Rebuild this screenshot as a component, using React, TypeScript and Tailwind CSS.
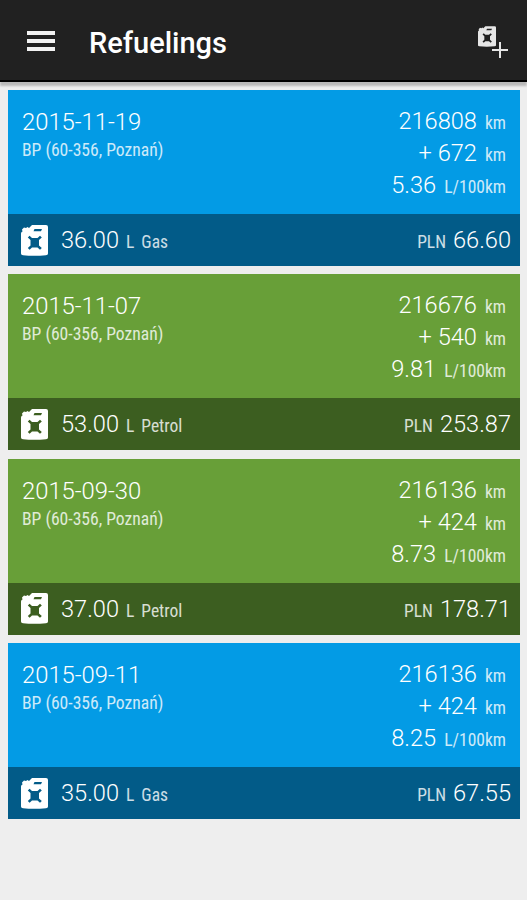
interface Refueling {
    date: string;
    station: string;
    odometer: string;
    distance: string;
    consumption: string;
    volume: string;
    fuel: "Gas" | "Petrol";
    price: string;
}

const refuelings: Refueling[] = [
    { date: "2015-11-19", station: "BP (60-356, Poznań)", odometer: "216808", distance: "+ 672", consumption: "5.36", volume: "36.00", fuel: "Gas", price: "66.60" },
    { date: "2015-11-07", station: "BP (60-356, Poznań)", odometer: "216676", distance: "+ 540", consumption: "9.81", volume: "53.00", fuel: "Petrol", price: "253.87" },
    { date: "2015-09-30", station: "BP (60-356, Poznań)", odometer: "216136", distance: "+ 424", consumption: "8.73", volume: "37.00", fuel: "Petrol", price: "178.71" },
    { date: "2015-09-11", station: "BP (60-356, Poznań)", odometer: "216136", distance: "+ 424", consumption: "8.25", volume: "35.00", fuel: "Gas", price: "67.55" },
];

const fuelColors = {
    Gas: { body: "bg-[#039be5]", footer: "bg-[#025b88]" },
    Petrol: { body: "bg-[#689f38]", footer: "bg-[#3c5e20]" },
};

// Jerry can with the handle slot and the X cut out
const CanIcon = ({ className }: { className?: string }) => (
    <svg viewBox="0 0 27 31" className={className} fill="currentColor" fillRule="evenodd">
        <path d="M11 0H25Q27 0 27 2V28.5Q27 30 25 30.3Q13 31.3 2 30.3Q0 30 0 28.5V8.5Q0 7 1.5 6.5L1 4.5L3 2.5L5 3L6.5 2L8 3ZM13.5 4L12.5 6.3H20L21 4ZM6.8 12.5L9.5 15V20.5L6.8 23L8.6 24.8L11 22.5H16.5L19 24.8L20.8 23L18 20.5V15L20.8 12.5L19 10.7L16.5 13H11L8.6 10.7Z" />
    </svg>
);

const Header = () => (
    <header className="relative z-10 flex h-[82px] shrink-0 items-center border-b-2 border-black bg-[#212121] pl-[27px] pr-[19px] text-white shadow-[0_4px_2px_rgba(0,0,0,0.22)]">
        <div className="mt-[2px] flex w-7 flex-col gap-1">
            <span className="h-1 bg-[#f2f2f2]" />
            <span className="h-1 bg-[#f2f2f2]" />
            <span className="h-1 bg-[#f2f2f2]" />
        </div>
        <h1 className="ml-[34px] mt-[5px] text-[29px] leading-8 font-medium">Refuelings</h1>
        <div className="relative ml-auto mt-[3px] h-8 w-[30px] text-[#e6e6e6]">
            <CanIcon className="h-[21px] w-[18px]" />
            <svg viewBox="0 0 16 16" className="absolute right-0 bottom-0 size-4" stroke="currentColor" strokeWidth="2">
                <path d="M8 0V16M0 8H16" />
            </svg>
        </div>
    </header>
);

const Measure = ({ value, unit }: { value: string; unit: string }) => (
    <div className="flex h-8 items-baseline justify-end gap-2">
        <span className="text-[23.6px] leading-8 font-light">{value}</span>
        <span className="text-[17.5px] leading-8 font-stretch-condensed opacity-80">{unit}</span>
    </div>
);

const RefuelingCard = ({ item }: { item: Refueling }) => {
    const colors = fuelColors[item.fuel];
    return (
        <article className="text-white">
            <div className={`flex h-[124px] justify-between pt-[15px] pr-[14px] pl-[14px] ${colors.body}`}>
                <div className="pt-px">
                    <div className="text-[23.8px] leading-8 font-light">{item.date}</div>
                    <div className="text-[17.6px] leading-6 font-stretch-condensed opacity-80">{item.station}</div>
                </div>
                <div>
                    <Measure value={item.odometer} unit="km" />
                    <Measure value={item.distance} unit="km" />
                    <Measure value={item.consumption} unit="L/100km" />
                </div>
            </div>
            <div className={`flex h-[52px] items-center pr-[9px] pl-[13px] ${colors.footer}`}>
                <CanIcon className="h-[31px] w-[27px]" />
                <div className="ml-[13px] flex items-baseline gap-[7px]">
                    <span className="text-[23.6px] leading-8 font-light">{item.volume}</span>
                    <span className="text-[17.5px] font-stretch-condensed opacity-80">L</span>
                    <span className="text-[17.5px] font-stretch-condensed opacity-80">{item.fuel}</span>
                </div>
                <div className="ml-auto flex items-baseline gap-[7px]">
                    <span className="text-[17.5px] font-stretch-condensed opacity-80">PLN</span>
                    <span className="text-[23.6px] leading-8 font-light">{item.price}</span>
                </div>
            </div>
        </article>
    );
};

export default function App() {
    return (
        <div className="flex h-[900px] w-[527px] flex-col overflow-hidden bg-[#eeeeee] font-[Roboto,sans-serif]">
            <Header />
            <main className="flex flex-col gap-[8.4px] pt-2 pr-[7px] pl-2">
                {refuelings.map((item) => (
                    <RefuelingCard key={item.date} item={item} />
                ))}
            </main>
        </div>
    );
}
